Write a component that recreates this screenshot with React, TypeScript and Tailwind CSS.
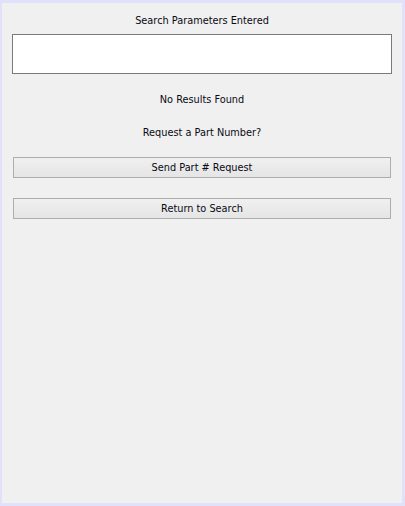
export default function App() {
  return (
    <div className="h-[506px] w-[405px] bg-[#e1e1fb] pt-[3px] pl-[2px] pr-[3px] pb-[3px]">
      <div
        className="flex h-full flex-col bg-[#f0f0f0] text-[9.75px] text-[#0a0a14]"
        style={{ fontFamily: '"DejaVu Sans", Tahoma, sans-serif' }}
      >
        <div className="mt-[11px] h-[14px] text-center leading-[14px]">Search Parameters Entered</div>
        <div className="mx-[10px] mt-[6px] h-[40px] border border-[#7a7a7a] bg-white" />
        <div className="mt-[19px] h-[14px] text-center leading-[14px]">No Results Found</div>
        <div className="mt-[19px] h-[14px] text-center leading-[14px]">Request a Part Number?</div>
        <button className="mx-[11px] mt-[17px] h-[21px] border border-[#adadad] bg-gradient-to-b from-[#f0f0f0] to-[#e5e5e5] text-[9.75px] leading-[19px] text-[#0a0a14]">
          Send Part # Request
        </button>
        <button className="mx-[11px] mt-[20px] h-[21px] border border-[#adadad] bg-gradient-to-b from-[#f0f0f0] to-[#e5e5e5] text-[9.75px] leading-[19px] text-[#0a0a14]">
          Return to Search
        </button>
      </div>
    </div>
  );
}
